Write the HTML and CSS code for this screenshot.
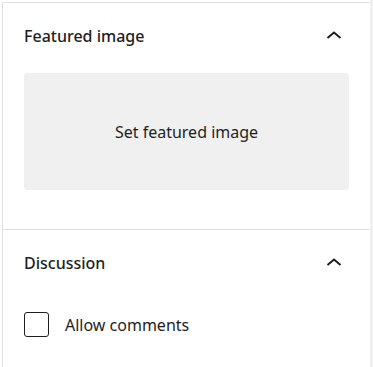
FILE: index.html
```html
<!DOCTYPE html>
<html lang="en">
  <head>
    <meta charset="UTF-8" />
    <meta name="viewport" content="width=device-width, initial-scale=1.0" />
    <title>Post settings</title>
    <link rel="stylesheet" href="styles.css">
  </head>
  <body>
    <div class="layout">
      <div class="sidebar">
        <div class="panel">
          <div class="panel-header">
            <h2 class="panel-title">Featured image</h2>
            <svg class="chevron" width="16" height="10" viewBox="0 0 16 10">
              <polyline points="1.5,8 8,2.5 14.5,8" fill="none" stroke="#1e1e1e" stroke-width="2" />
            </svg>
          </div>
          <div class="panel-body featured">
            <button class="image-drop">Set featured image</button>
          </div>
        </div>
        <div class="panel">
          <div class="panel-header">
            <h2 class="panel-title">Discussion</h2>
            <svg class="chevron" width="16" height="10" viewBox="0 0 16 10">
              <polyline points="1.5,8 8,2.5 14.5,8" fill="none" stroke="#1e1e1e" stroke-width="2" />
            </svg>
          </div>
          <div class="panel-body">
            <label class="check-row">
              <span class="checkbox"></span>
              Allow comments
            </label>
          </div>
        </div>
      </div>
      <div class="scroll-track"></div>
    </div>
  </body>
</html>
```

FILE: styles.css
```css
html,
body {
  margin: 0;
  height: 100%;
  background: #fff;
}

body {
  font-family: "Noto Sans", "Open Sans", sans-serif;
  color: #1e1e1e;
  overflow: hidden;
}

.layout {
  display: flex;
  height: 100%;
  padding: 2px 0 0 2px;
  box-sizing: border-box;
}

.sidebar {
  flex: 1;
  border-left: 1px solid #e0e0e0;
  border-top: 1px solid #e0e0e0;
}

.scroll-track {
  width: 3px;
  background: #f0f0f0;
  margin-top: -2px;
}

.panel + .panel {
  border-top: 1px solid #e0e0e0;
}

.panel-header {
  display: flex;
  align-items: center;
  justify-content: space-between;
  height: 66px;
  padding: 0 28px 0 21px;
}

.panel-title {
  margin: 0;
  font-size: 16px;
  font-weight: 500;
}

.chevron {
  display: block;
  margin-top: -2px;
}

.panel-body {
  padding: 0 21px 0 21px;
}

.featured {
  padding-top: 4px;
  padding-bottom: 39px;
}

.image-drop {
  display: flex;
  align-items: center;
  justify-content: center;
  width: 100%;
  height: 117px;
  border: none;
  border-radius: 3px;
  background: #f0f0f0;
  font-family: inherit;
  font-size: 16px;
  color: #1e1e1e;
}

.check-row {
  display: flex;
  align-items: center;
  gap: 16px;
  margin-top: 16px;
  font-size: 16px;
}

.checkbox {
  width: 23px;
  height: 23px;
  border: 1px solid #1e1e1e;
  border-radius: 3px;
}
```
